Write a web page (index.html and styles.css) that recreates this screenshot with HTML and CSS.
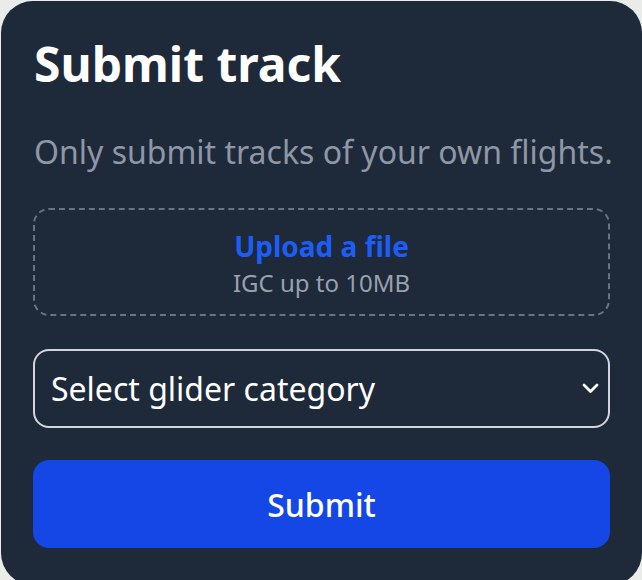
FILE: index.html
```html
<!DOCTYPE html>
<html>
<head>
<meta charset="utf-8">
<link rel="stylesheet" href="styles.css">
</head>
<body>
<div class="card">
  <h1 class="title">Submit track</h1>
  <p class="subtitle">Only submit tracks of your own flights.</p>
  <div class="dropzone">
    <span class="upload-link">Upload a file</span>
    <span class="upload-hint">IGC up to 10MB</span>
  </div>
  <div class="select">
    <span class="select-text">Select glider category</span>
    <svg class="chevron" width="19" height="13" viewBox="0 0 19 13"><path d="M3 3 L9.5 9.5 L16 3" fill="none" stroke="#ffffff" stroke-width="2.8" stroke-linecap="round" stroke-linejoin="round"/></svg>
  </div>
  <button class="submit">Submit</button>
</div>
</body>
</html>
```
FILE: styles.css
```css
html, body {
  margin: 0;
  padding: 0;
  background: #eaece9;
  overflow: hidden;
}
body {
  padding: 1px 0 0 1px;
  font-family: "Noto Sans", "Open Sans", sans-serif;
}
.card {
  box-sizing: border-box;
  width: 641px;
  height: 584px;
  background: #1e2939;
  border-radius: 32px;
  padding: 31px 32px 32px 32px;
  display: flex;
  flex-direction: column;
}
.card > * {
  flex-shrink: 0;
}
.title {
  margin: 0 0 0 1px;
  color: #ffffff;
  font-size: 48px;
  font-weight: 700;
  line-height: 64px;
  white-space: nowrap;
}
.subtitle {
  margin: 36px 0 0 1px;
  color: #8e97a6;
  font-size: 32px;
  line-height: 40px;
  white-space: nowrap;
}
.dropzone {
  margin-top: 36px;
  height: 108px;
  box-sizing: border-box;
  border: 2px dashed #6b7280;
  border-radius: 16px;
  display: flex;
  flex-direction: column;
  align-items: center;
  justify-content: center;
}
.upload-link {
  color: #1c5ef5;
  font-weight: 700;
  font-size: 28px;
  line-height: 42px;
}
.upload-hint {
  color: #99a1af;
  font-size: 24px;
  line-height: 32px;
}
.select {
  margin-top: 33px;
  height: 79px;
  box-sizing: border-box;
  border: 2px solid #d1d5dc;
  border-radius: 16px;
  display: flex;
  align-items: center;
  justify-content: space-between;
  padding: 0 8px 0 16px;
}
.select-text {
  color: #ffffff;
  font-size: 32px;
  white-space: nowrap;
}
.chevron {
  display: block;
}
.submit {
  margin-top: 32px;
  height: 88px;
  border: none;
  border-radius: 16px;
  background: #1447e6;
  color: #ffffff;
  font-family: "Noto Sans", "Open Sans", sans-serif;
  font-size: 32px;
  font-weight: 500;
}
```
